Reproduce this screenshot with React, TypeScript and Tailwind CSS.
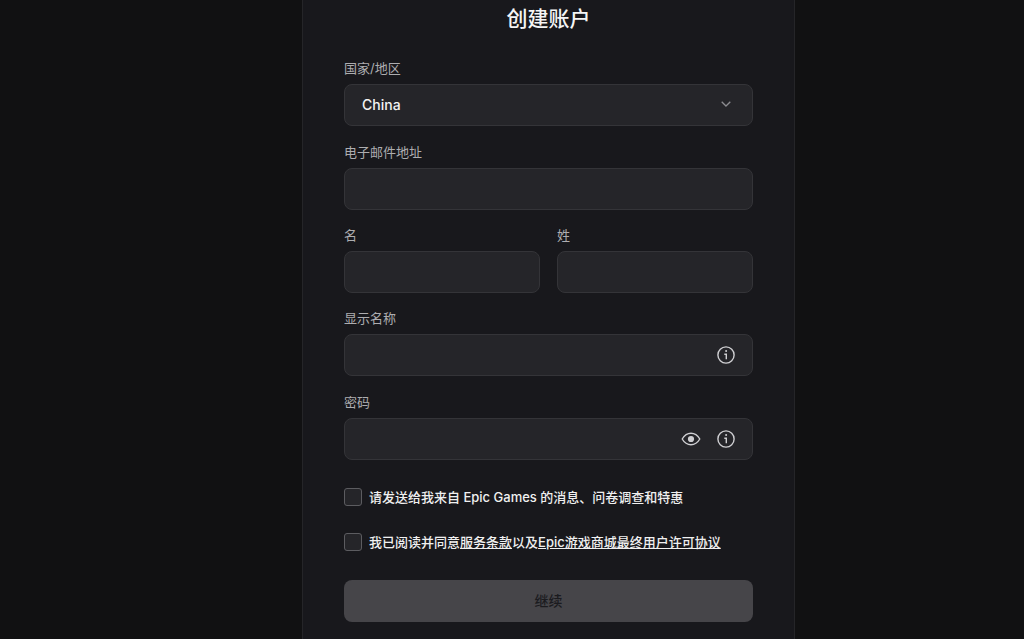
import { useId, type ReactNode } from "react";

const fieldBox =
  "h-[42px] w-full appearance-none rounded-lg border border-[#343438] bg-[#252529] px-[17px] text-sm font-medium text-[#f2f2f2] outline-none focus:border-[#8a8a90]";

function Field({ label, children }: { label: string; children: (id: string) => ReactNode }) {
  const id = useId();
  return (
    <div className="min-w-0 flex-1">
      <label htmlFor={id} className="mb-[7px] block text-[13px] leading-[18px] text-[#adadb0]">
        {label}
      </label>
      <div className="relative">{children(id)}</div>
    </div>
  );
}

function InfoButton({ label }: { label: string }) {
  return (
    <button type="button" aria-label={label} className="text-[#cfcfd2]">
      <svg viewBox="0 0 18 18" className="size-[18px]" fill="none" stroke="currentColor">
        <circle cx="9" cy="9" r="8.1" strokeWidth="1.4" />
        <path d="M7.300 8.300h2v5" strokeWidth="1.4" />
        <circle cx="9.100" cy="5" r="1" fill="currentColor" stroke="none" />
      </svg>
    </button>
  );
}

function EyeButton() {
  return (
    <button type="button" aria-label="显示密码" className="text-[#cfcfd2]">
      <svg viewBox="0 0 20 18" className="h-[18px] w-5" fill="none" stroke="currentColor">
        <path
          d="M1.2 9C3.4 5.2 6.4 3.2 10 3.2S16.6 5.2 18.8 9C16.6 12.8 13.6 14.8 10 14.8S3.4 12.8 1.2 9Z"
          strokeWidth="1.4"
          strokeLinejoin="round"
        />
        <circle cx="10" cy="9" r="3.1" fill="currentColor" stroke="none" />
      </svg>
    </button>
  );
}

function Consent({ children }: { children: ReactNode }) {
  return (
    <label className="flex items-center gap-[7px] text-[13px] leading-5 font-medium text-[#f0f0f0]">
      <input
        type="checkbox"
        className="size-[18px] shrink-0 appearance-none rounded-[3px] border border-[#5c5c60] bg-[#252529] checked:bg-[#26bbff]"
      />
      <span>{children}</span>
    </label>
  );
}

export default function App() {
  return (
    <div className="flex min-h-screen justify-center bg-[#111112] pl-[73px] font-['Inter','Noto_Sans_CJK_SC',sans-serif]">
      <main className="w-full max-w-[493px] border-x border-[#252528] bg-[#18181c] px-[41px] pt-[5px] pb-4">
        <h1 className="mb-[26px] text-center text-[21px] leading-7 font-medium text-[#f5f5f5]">创建账户</h1>
        <form className="flex flex-col" onSubmit={(event) => event.preventDefault()}>
          <div className="flex flex-col gap-4">
            <div className="flex flex-col gap-[17px]">
              <Field label="国家/地区">
                {(id) => (
                  <>
                    <select id={id} className={fieldBox} defaultValue="China">
                      <option>China</option>
                    </select>
                    <svg
                      viewBox="0 0 10 6"
                      className="pointer-events-none absolute top-[17px] right-[22px] h-[6px] w-[10px] text-[#8c8c90]"
                      fill="none"
                      stroke="currentColor"
                      strokeWidth="1.3"
                    >
                      <path d="M.7.7 5 5 9.3.7" />
                    </svg>
                  </>
                )}
              </Field>
              <Field label="电子邮件地址">{(id) => <input id={id} type="email" className={fieldBox} />}</Field>
            </div>
            <div className="flex gap-[17px]">
              <Field label="名">{(id) => <input id={id} type="text" className={fieldBox} />}</Field>
              <Field label="姓">{(id) => <input id={id} type="text" className={fieldBox} />}</Field>
            </div>
            <div className="flex flex-col gap-[17px]">
              <Field label="显示名称">
                {(id) => (
                  <>
                    <input id={id} type="text" className={fieldBox} />
                    <div className="absolute inset-y-0 right-[18px] flex items-center">
                      <InfoButton label="显示名称说明" />
                    </div>
                  </>
                )}
              </Field>
              <Field label="密码">
                {(id) => (
                  <>
                    <input id={id} type="password" className={fieldBox} />
                    <div className="absolute inset-y-0 right-[18px] flex items-center gap-4">
                      <EyeButton />
                      <InfoButton label="密码说明" />
                    </div>
                  </>
                )}
              </Field>
            </div>
          </div>
          <div className="mt-[27px] mb-7 flex flex-col gap-[25px]">
            <Consent>请发送给我来自 Epic Games 的消息、问卷调查和特惠</Consent>
            <Consent>
              我已阅读并同意
              <a href="#terms" className="underline">
                服务条款
              </a>
              以及
              <a href="#eula" className="underline">
                Epic游戏商城最终用户许可协议
              </a>
            </Consent>
          </div>
          <button
            type="submit"
            disabled
            className="h-[42px] w-full rounded-lg bg-[#464549] text-sm font-medium text-[#1b1b1f]"
          >
            继续
          </button>
        </form>
      </main>
    </div>
  );
}
